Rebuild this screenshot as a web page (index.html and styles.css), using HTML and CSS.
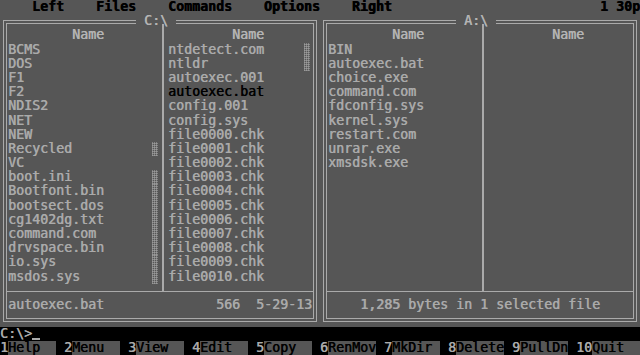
FILE: index.html
```html
<!DOCTYPE html>
<html>
<head>
  <meta charset="UTF-8">
  <title>Commander</title>
  <link rel="stylesheet" href="styles.css">
</head>
<body>
  <div class="screen">
    <div class="menubar">
      <span class="menu">    Left    Files    Commands    Options    Right</span>
      <span class="clock">1 30p</span>
    </div>

    <div class="panels">
      <section class="panel">
        <div class="title"> C:\ </div>
        <div class="frame"><div class="frame-in">
          <div class="cols">
            <div class="col col-a">
              <div class="head">Name</div>
              <div class="row">BCMS</div>
              <div class="row">DOS</div>
              <div class="row">F1</div>
              <div class="row">F2</div>
              <div class="row">NDIS2</div>
              <div class="row">NET</div>
              <div class="row">NEW</div>
              <div class="row">Recycled<span class="shade"></span></div>
              <div class="row">VC</div>
              <div class="row">boot.ini<span class="shade"></span></div>
              <div class="row">Bootfont.bin<span class="shade"></span></div>
              <div class="row">bootsect.dos<span class="shade"></span></div>
              <div class="row">cg1402dg.txt<span class="shade"></span></div>
              <div class="row">command.com<span class="shade"></span></div>
              <div class="row">drvspace.bin<span class="shade"></span></div>
              <div class="row">io.sys<span class="shade"></span></div>
              <div class="row">msdos.sys<span class="shade"></span></div>
            </div>
            <div class="col col-b">
              <div class="head">Name</div>
              <div class="row">ntdetect.com<span class="shade"></span></div>
              <div class="row">ntldr<span class="shade"></span></div>
              <div class="row">autoexec.001</div>
              <div class="row current">autoexec.bat</div>
              <div class="row">config.001</div>
              <div class="row">config.sys</div>
              <div class="row">file0000.chk</div>
              <div class="row">file0001.chk</div>
              <div class="row">file0002.chk</div>
              <div class="row">file0003.chk</div>
              <div class="row">file0004.chk</div>
              <div class="row">file0005.chk</div>
              <div class="row">file0006.chk</div>
              <div class="row">file0007.chk</div>
              <div class="row">file0008.chk</div>
              <div class="row">file0009.chk</div>
              <div class="row">file0010.chk</div>
            </div>
          </div>
          <div class="sep"></div>
          <div class="status">
            <span>autoexec.bat</span>
            <span class="size">566</span>
            <span class="date">5-29-13</span>
          </div>
        </div></div>
      </section>

      <section class="panel">
        <div class="title"> A:\ </div>
        <div class="frame"><div class="frame-in">
          <div class="cols">
            <div class="col col-a">
              <div class="head">Name</div>
              <div class="row">BIN</div>
              <div class="row">autoexec.bat</div>
              <div class="row">choice.exe</div>
              <div class="row">command.com</div>
              <div class="row">fdconfig.sys</div>
              <div class="row">kernel.sys</div>
              <div class="row">restart.com</div>
              <div class="row">unrar.exe</div>
              <div class="row">xmsdsk.exe</div>
            </div>
            <div class="col col-b">
              <div class="head">Name</div>
            </div>
          </div>
          <div class="sep"></div>
          <div class="status centered">
            <span>1,285 bytes in 1 selected file</span>
          </div>
        </div></div>
      </section>
    </div>

    <div class="cmdline">C:\&gt;<span class="cursor"></span></div>

    <div class="keys">
      <div class="key"><span class="num">1</span><span class="label">Help</span></div>
      <div class="key"><span class="num">2</span><span class="label">Menu</span></div>
      <div class="key"><span class="num">3</span><span class="label">View</span></div>
      <div class="key"><span class="num">4</span><span class="label">Edit</span></div>
      <div class="key"><span class="num">5</span><span class="label">Copy</span></div>
      <div class="key"><span class="num">6</span><span class="label">RenMov</span></div>
      <div class="key"><span class="num">7</span><span class="label">MkDir</span></div>
      <div class="key"><span class="num">8</span><span class="label">Delete</span></div>
      <div class="key"><span class="num">9</span><span class="label">PullDn</span></div>
      <div class="key"><span class="num">10</span><span class="label">Quit</span></div>
    </div>
  </div>
</body>
</html>
```

FILE: styles.css
```css
body {
  margin: 0;
  background: #000;
  font-family: "DejaVu Sans Mono", "Liberation Mono", monospace;
  font-size: 13.29px;
  text-shadow: 0.6px 0 0 currentColor;
}
.screen {
  width: 640px;
  height: 355px;
  overflow: hidden;
}
.menubar {
  display: flex;
  height: 14.2px;
  line-height: 14.2px;
  background: #565656;
  color: #000;
  font-weight: bold;
  white-space: pre;
}
.clock {
  margin-left: auto;
}
.panels {
  display: flex;
  background: #565656;
}
.panel {
  position: relative;
  width: 320px;
  box-sizing: border-box;
  padding: 6px 3px 4.2px 3px;
  color: #aaa;
}
.title {
  position: absolute;
  top: 0;
  left: 136px;
  height: 14.2px;
  line-height: 14.2px;
  white-space: pre;
  color: #b4b4b4;
  background: linear-gradient(transparent 5px, #565656 5px, #565656 10px, transparent 10px);
}
.frame {
  border: 1px solid #aaa;
  padding: 2px;
}
.frame-in {
  border: 1px solid #aaa;
}
.cols {
  display: flex;
}
.col {
  height: 255.6px;
}
.col-a {
  width: 152px;
  padding: 4.2px 2px 7px 1px;
  border-right: 2px solid #aaa;
}
.col-b {
  flex: 1;
  padding: 4.2px 1px 7px 4px;
}
.head,
.row {
  display: flex;
  height: 14.2px;
  line-height: 14.2px;
  white-space: pre;
}
.head {
  padding-left: 64px;
  color: #b4b4b4;
}
.row.current {
  color: #000;
}
.shade {
  margin-left: auto;
  margin-right: 2px;
  width: 6px;
  background:
    repeating-linear-gradient(0deg, rgba(170, 170, 170, .55) 0 1px, transparent 1px 2px),
    repeating-linear-gradient(90deg, rgba(170, 170, 170, .55) 0 1px, transparent 1px 2px);
}
.sep {
  height: 1px;
  background: #aaa;
  margin-bottom: 6.2px;
}
.status {
  display: flex;
  height: 14.2px;
  line-height: 14.2px;
  padding: 0 1px 6px 1px;
  white-space: pre;
}
.status .size {
  margin-left: auto;
}
.status .date {
  margin-left: 16px;
}
.status.centered {
  justify-content: center;
}
.cmdline {
  display: flex;
  height: 14.2px;
  line-height: 14.2px;
  color: #aaa;
  background: #000;
}
.cursor {
  width: 8px;
  height: 2px;
  margin-top: 11px;
  background: #aaa;
}
.keys {
  display: flex;
  height: 14.2px;
  line-height: 14.2px;
  background: #000;
}
.key {
  display: flex;
  width: 64px;
}
.num {
  color: #aaa;
}
.label {
  width: 48px;
  background: #565656;
  color: #000;
}
```
